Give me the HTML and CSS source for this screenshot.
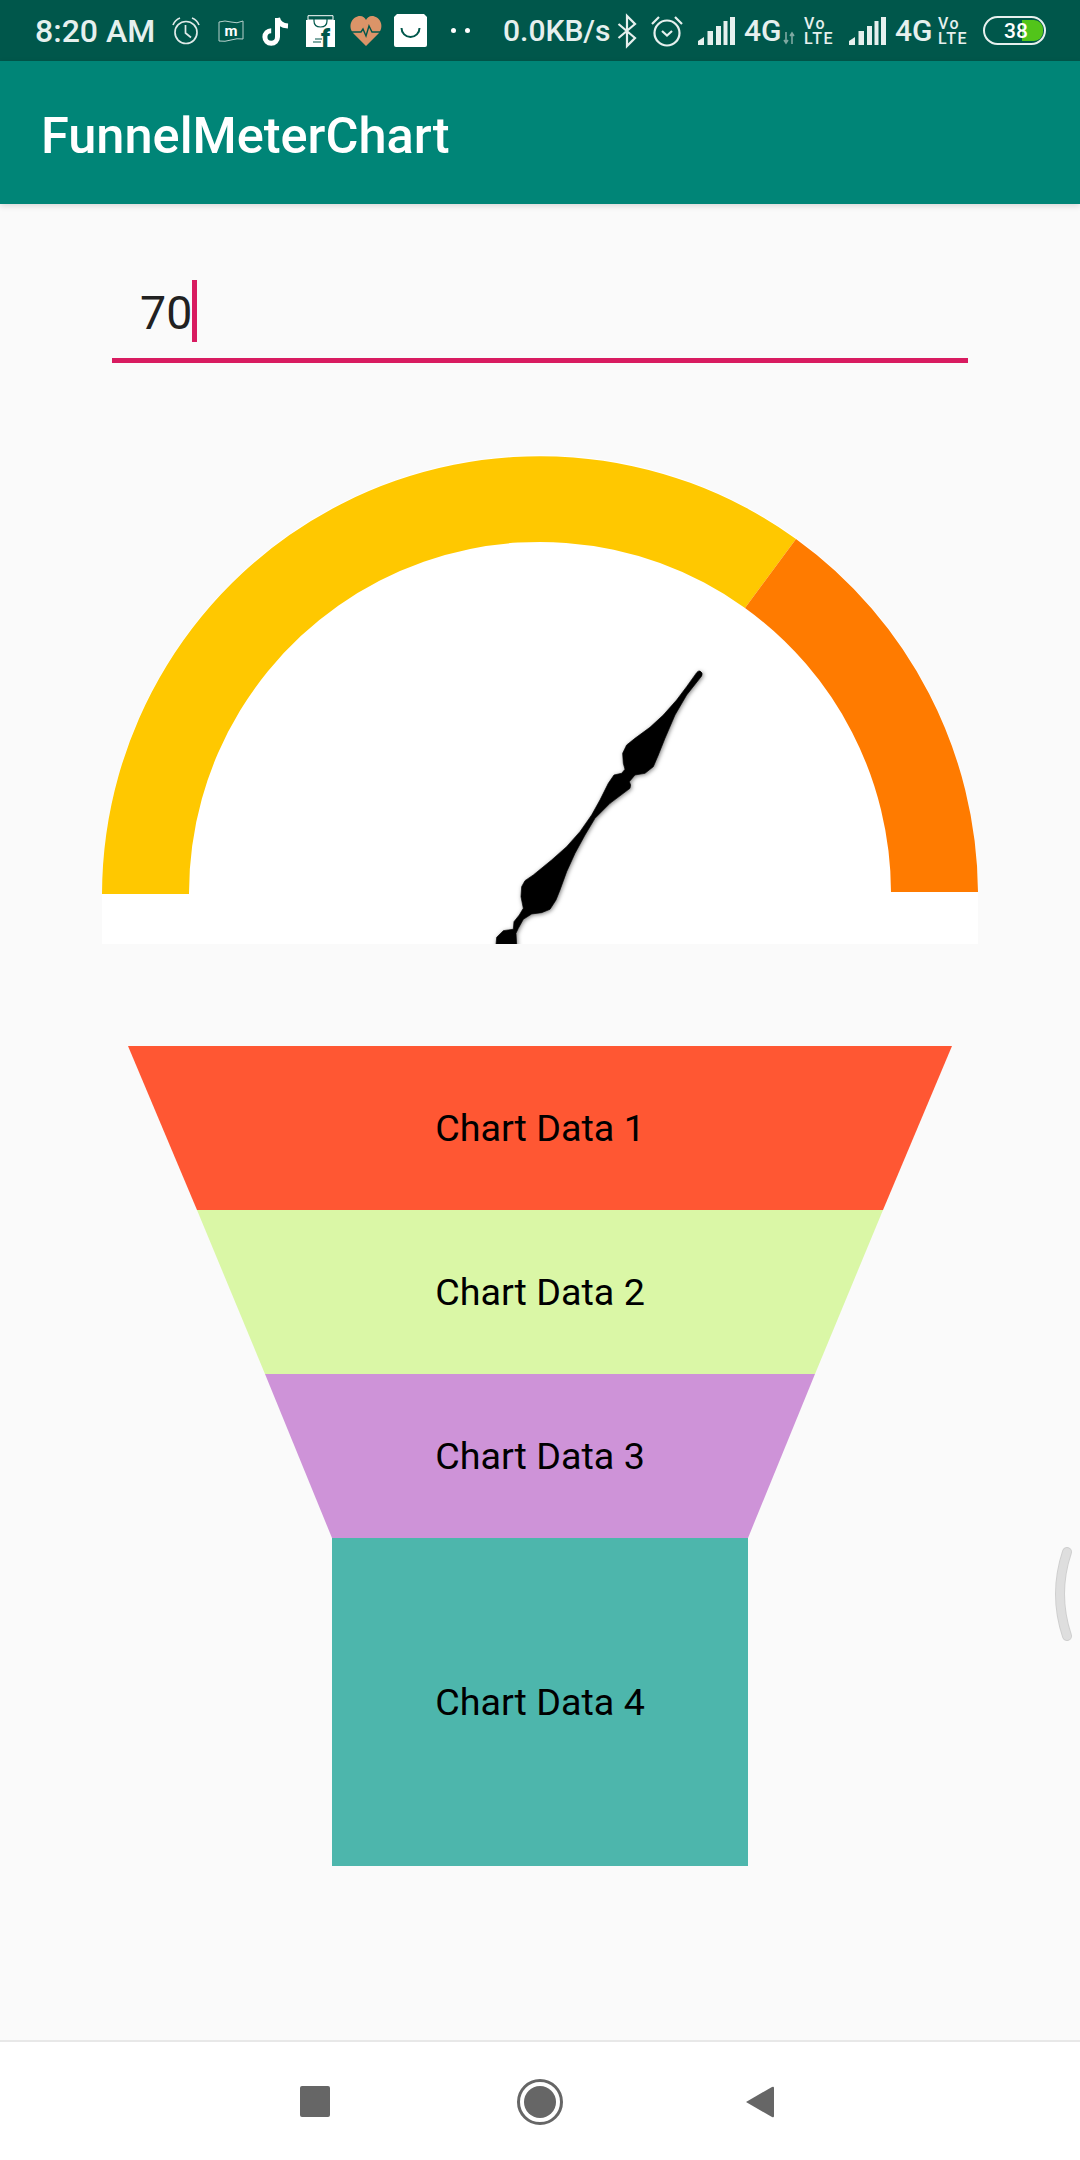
FILE: index.html
```html
<!DOCTYPE html>
<html lang="en">
<head>
    <meta charset="UTF-8">
    <meta name="viewport" content="width=device-width, initial-scale=1">
    <title>FunnelMeterChart</title>
    <link rel="stylesheet" href="styles.css">
</head>
<body>
<svg class="defs" width="0" height="0">
    <symbol id="signal" viewBox="0 0 37 28">
        <path d="M0 28 V24 L6 20 V28 Z"/>
        <rect x="9.5" y="14" width="5.5" height="14"/>
        <rect x="18" y="9" width="5" height="19"/>
        <rect x="25.5" y="4" width="4" height="24"/>
        <rect x="32" y="0" width="5" height="28"/>
    </symbol>
</svg>

<div class="status-bar">
    <span class="time">8:20 AM</span>
    <svg class="ic ic-alarm" width="28" height="28" viewBox="0 0 28 28">
        <circle cx="14" cy="15.5" r="11" fill="none" stroke="#dfeae8" stroke-width="1.7"/>
        <path d="M13.5 8 V16 L19 20.5" fill="none" stroke="#dfeae8" stroke-width="1.7"/>
        <path d="M1 8 Q3 3 8 1 M27 8 Q25 3 20 1" fill="none" stroke="#dfeae8" stroke-width="1.7"/>
    </svg>
    <svg class="ic ic-flag" width="26" height="22" viewBox="0 0 26 22">
        <path d="M1 2 Q7 0 13 2 T25 1 V19 Q19 18 13 20 T1 21 Z" fill="none" stroke="#b9d2cd" stroke-width="1"/>
        <text x="13" y="16" class="flag-m">m</text>
    </svg>
    <svg class="ic ic-tiktok" width="26" height="30" viewBox="0 0 26 30">
        <path d="M14.5 2 V21 A6.3 6.3 0 1 1 8.2 14.7" fill="none" stroke="#fff" stroke-width="5"/>
        <path d="M14.5 2 Q16 9.5 25 10" fill="none" stroke="#fff" stroke-width="5"/>
    </svg>
    <svg class="ic ic-shop" width="31" height="32" viewBox="0 0 31 32">
        <path d="M3 0.7 H28 V5 H3 Z" fill="none" stroke="#fff" stroke-width="1"/>
        <path d="M1 5 H30 V32 H1 Z" fill="#fff"/>
        <path d="M9 2 V6 Q9 12 15.5 12 Q22 12 22 6 V2" fill="none" stroke="#00574b" stroke-width="1.2"/>
        <path d="M10 24 H17 M8 27 H16" stroke="#00574b" stroke-width="1.2"/>
        <text x="16" y="31.5" class="shop-f">f</text>
    </svg>
    <svg class="ic ic-heart" width="32" height="30" viewBox="0 0 32 30">
        <path d="M16 30 L3 17 C-3 9 3 0 10 0 C13 0 15 2 16 4 C17 2 19 0 22 0 C29 0 35 9 29 17 Z" fill="#db9468"/>
        <path d="M1 16 H11 L13 13 L16 20 L19 10 L22 16 H31" fill="none" stroke="#00574b" stroke-width="1.4"/>
    </svg>
    <svg class="ic ic-bag" width="33" height="33" viewBox="0 0 33 33">
        <path d="M3 0 H30 L33 3 V31 Q33 33 31 33 H2 Q0 33 0 31 V3 Z" fill="#fff"/>
        <path d="M7.5 14 A9 9 0 0 0 25.5 14" fill="none" stroke="#00574b" stroke-width="2"/>
    </svg>
    <span class="dots"><i></i><i></i></span>
    <span class="speed">0.0KB/s</span>
    <svg class="ic ic-bt" width="20" height="32" viewBox="0 0 20 32">
        <path d="M1.5 9 L18 23 L10 31 V1 L18 9 L1.5 23" fill="none" stroke="#e6f0ee" stroke-width="2.2"/>
    </svg>
    <svg class="ic ic-alarm2" width="32" height="32" viewBox="0 0 32 32">
        <circle cx="16" cy="18" r="12.5" fill="none" stroke="#e6f0ee" stroke-width="2.2"/>
        <path d="M11 16 L16 20.5 L21 16 M1 9 L8 2 M31 9 L24 2" fill="none" stroke="#e6f0ee" stroke-width="2.2"/>
    </svg>
    <svg class="ic ic-signal" width="37" height="28"><use href="#signal"/></svg>
    <span class="net">4G</span>
    <svg class="ic ic-arrows" width="12" height="12" viewBox="0 0 12 12">
        <path d="M3 0 V11 M9 1 V12 M1 8 L3 11 L5 8 M7 4 L9 1 L11 4" fill="none" stroke="#7fa9a2" stroke-width="1.6"/>
    </svg>
    <span class="volte"><span>Vo</span><span>LTE</span></span>
    <svg class="ic ic-signal ic-signal-2" width="37" height="28"><use href="#signal"/></svg>
    <span class="net">4G</span>
    <span class="volte volte-2"><span>Vo</span><span>LTE</span></span>
    <span class="battery"><span class="battery-level"></span><span class="battery-num">38</span></span>
</div>

<div class="toolbar">FunnelMeterChart</div>

<div class="content">
    <div class="field">70<span class="caret"></span></div>

    <svg class="gauge" width="876" height="490" viewBox="0 0 876 490">
        <path d="M0 440 A438 439 0 0 1 876 440 V490 H0 Z" fill="#fff"/>
        <path d="M0 440 A438 439 0 0 1 694 85 L643 154 A351 351 0 0 0 87 440 Z" fill="#ffc800"/>
        <path d="M694 85 A438 439 0 0 1 876 438 H789 A351 351 0 0 0 643 154 Z" fill="#ff7b00"/>
        <!-- needle, traced in 3x units -->
        <path class="needle" transform="translate(358 196) scale(.3333)" d="M710 68 L680 110 650 150 610 195 570 232 525 265 500 285 488 310 490 340 495 358 485 370 462 375 445 400 420 450 395 495 360 545 320 590 275 630 220 675 195 692 185 710 183 740 190 775 178 795 162 815 160 838 130 842 110 862 108 885 V900 H170 V885 L168 850 175 835 190 808 215 792 245 788 270 778 288 750 300 720 320 665 345 610 375 555 405 505 450 460 510 415 512 405 508 395 525 375 555 370 580 350 595 315 615 265 645 195 680 135 725 78 Q730 68 720 63 Q714 62 710 68 Z"/>
    </svg>

    <div class="funnel">
        <div class="row row-1">Chart Data 1</div>
        <div class="row row-2">Chart Data 2</div>
        <div class="row row-3">Chart Data 3</div>
        <div class="row row-4">Chart Data 4</div>
    </div>
</div>

<svg class="edge-handle" width="20" height="94" viewBox="0 0 20 94">
    <path d="M14 5 Q0 47 14 89" fill="none" stroke="#cfcfcf" stroke-width="10" stroke-linecap="round"/>
    <path d="M14 5 Q0 47 14 89" fill="none" stroke="#dedede" stroke-width="8" stroke-linecap="round"/>
</svg>

<div class="nav-bar">
    <span class="nav-square"></span>
    <span class="nav-circle"><span></span></span>
    <svg class="nav-back" width="29" height="34" viewBox="0 0 29 34">
        <path d="M1 17 L27 2 Q29 1 29 3 V31 Q29 33 27 32 Z" fill="#666"/>
    </svg>
</div>
</body>
</html>
```

FILE: styles.css
```css
* {
    margin: 0;
    padding: 0;
    box-sizing: border-box;
}

body {
    width: 1080px;
    height: 2160px;
    display: flex;
    flex-direction: column;
    background: #fafafa;
    font-family: Roboto, sans-serif;
    overflow: hidden;
    position: relative;
}

.defs {
    position: absolute;
}

.status-bar {
    height: 61px;
    flex: none;
    display: flex;
    align-items: center;
    padding-left: 35px;
    background: #00574b;
    color: #e6f0ee;
    font-weight: 500;
}

.ic {
    flex: none;
    display: block;
    overflow: visible;
}

.time {
    width: 118px;
    flex: none;
    font-size: 32px;
    white-space: nowrap;
}

.ic-alarm { margin-left: 19px; }
.ic-flag { margin-left: 18px; }
.ic-tiktok { margin-left: 19px; }
.ic-shop { margin-left: 16px; }
.ic-heart { margin-left: 14px; }
.ic-bag { margin-left: 12px; }

.flag-m {
    font-size: 15px;
    font-weight: 700;
    fill: #fff;
    text-anchor: middle;
}

.shop-f {
    font-size: 25px;
    font-weight: 900;
    fill: #00574b;
}

.dots {
    margin-left: 24px;
    display: flex;
    gap: 9px;
}

.dots i {
    width: 5px;
    height: 5px;
    border-radius: 50%;
    background: #fff;
}

.speed {
    margin-left: 33px;
    width: 107px;
    flex: none;
    font-size: 30px;
    white-space: nowrap;
}

.ic-bt { margin-left: 7px; }
.ic-alarm2 { margin-left: 14px; }
.ic-signal { margin: 1px 0 0 15px; fill: #e6f0ee; }
.ic-signal-2 { margin-left: 14px; }

.net {
    margin-left: 9px;
    width: 35px;
    flex: none;
    font-size: 30px;
    white-space: nowrap;
}

.ic-arrows {
    margin: 14px 0 0 4px;
}

.volte {
    margin-left: 9px;
    width: 31px;
    flex: none;
    display: flex;
    flex-direction: column;
    font-size: 16px;
    line-height: 15px;
    letter-spacing: 1.5px;
    white-space: nowrap;
}

.volte-2 {
    margin-left: 8px;
}

.battery {
    margin-left: 14px;
    width: 63px;
    height: 29px;
    flex: none;
    border: 2.5px solid #e6f0ee;
    border-radius: 15px;
    position: relative;
    display: flex;
    align-items: center;
    justify-content: center;
}

.battery-level {
    position: absolute;
    right: 1px;
    top: 2px;
    bottom: 2px;
    width: 21px;
    border-radius: 0 9px 9px 0;
    background: #52c41a;
}

.battery-num {
    position: relative;
    font-size: 21px;
    color: #fff;
    margin-left: 3px;
}

.toolbar {
    height: 143px;
    flex: none;
    padding: 5px 0 0 41px;
    display: flex;
    align-items: center;
    background: #008577;
    color: #fff;
    font-size: 50.5px;
    font-weight: 500;
    box-shadow: 0 2px 6px rgba(0, 0, 0, .14);
    position: relative;
}

.content {
    flex: 1;
    display: flex;
    flex-direction: column;
    align-items: center;
}

.field {
    width: 856px;
    height: 159px;
    margin-bottom: 91px;
    padding: 82px 0 0 28px;
    border-bottom: 5px solid #d81b60;
    display: flex;
    align-items: flex-start;
    font-size: 46.5px;
    line-height: 55px;
    color: #212121;
}

.caret {
    width: 5px;
    height: 62px;
    margin-top: -6px;
    background: #d81b60;
}

.gauge {
    display: block;
    flex: none;
    margin-bottom: 102px;
}

.needle {
    stroke: #000;
    stroke-width: 2;
    stroke-linejoin: round;
    filter: drop-shadow(3px 3px 6px rgba(0, 0, 0, .5));
}

.funnel {
    width: 824px;
    display: flex;
    flex-direction: column;
}

.row {
    height: 164px;
    display: flex;
    align-items: center;
    justify-content: center;
    font-size: 37.7px;
    color: #000;
}

.row-1 {
    background: #ff5733;
    clip-path: polygon(0 0, 824px 0, 755px 100%, 69px 100%);
}

.row-2 {
    background: #daf7a6;
    clip-path: polygon(69px 0, 755px 0, 687px 100%, 137px 100%);
}

.row-3 {
    background: #ce93d8;
    clip-path: polygon(137px 0, 687px 0, 620px 100%, 204px 100%);
}

.row-4 {
    height: 328px;
    background: #4db6ac;
    clip-path: polygon(204px 0, 620px 0, 620px 100%, 204px 100%);
}

.edge-handle {
    position: absolute;
    left: 1053px;
    top: 1547px;
}

.nav-bar {
    height: 120px;
    flex: none;
    display: flex;
    align-items: center;
    padding: 1px 0 0 300px;
    background: #fff;
    border-top: 2px solid #e8e8e8;
}

.nav-square {
    width: 30px;
    height: 31px;
    border-radius: 2px;
    background: #666;
}

.nav-circle {
    width: 46px;
    height: 46px;
    margin: 0 182px 0 187px;
    border: 3px solid #666;
    border-radius: 50%;
    display: flex;
    align-items: center;
    justify-content: center;
}

.nav-circle span {
    width: 32px;
    height: 32px;
    border-radius: 50%;
    background: #666;
}

.nav-back {
    display: block;
    flex: none;
}
```
